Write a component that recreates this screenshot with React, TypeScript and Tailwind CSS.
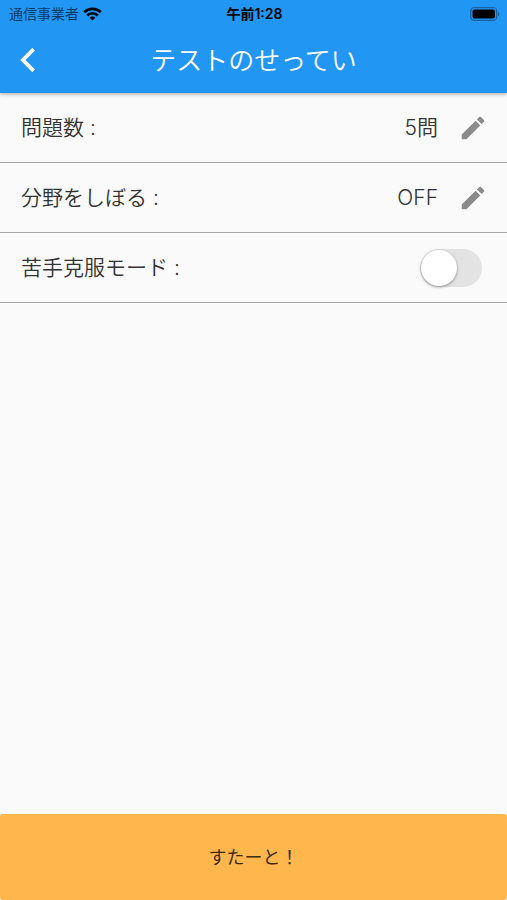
import React, { useState } from 'react';

const StatusBar = () => (
  <div className="grid grid-cols-3 items-center h-[27px] pl-[9px] pr-[7px] text-[14px] leading-4 text-black">
    <div className="flex items-center gap-1">
      <span className="text-[#0b3c66]">通信事業者</span>
      <svg width="19" height="14" viewBox="0 0 19 14" fill="none" stroke="#00060c" strokeWidth="2.7">
        <path d="M1.3 5.2a11.8 11.8 0 0 1 16.4 0" />
        <path d="M4.2 8.5a7.4 7.4 0 0 1 10.6 0" />
        <path d="M9.5 13.6 6.6 10.7a4 4 0 0 1 5.8 0z" fill="#00060c" stroke="none" />
      </svg>
    </div>
    <span className="text-center font-semibold whitespace-nowrap">午前1:28</span>
    <svg className="justify-self-end" width="30" height="14" viewBox="0 0 30 14">
      <rect x="0.7" y="0.7" width="26" height="12.6" rx="3.6" fill="none" stroke="#1663a3" strokeWidth="1.3" />
      <rect x="2.5" y="2.5" width="22.4" height="9" rx="2" fill="#000" />
      <path d="M28 4.8c2 .8 2 3.6 0 4.4z" fill="#1663a3" />
    </svg>
  </div>
);

const EditButton = ({ label }: { label: string }) => (
  <button type="button" aria-label={label} className="cursor-pointer">
    <svg width="30" height="30" viewBox="0 0 24 24" fill="#8b8b8b">
      <path d="M3 17.25V21h3.75L17.81 9.94l-3.75-3.75L3 17.25zM20.71 7.04a1 1 0 0 0 0-1.41l-2.34-2.34a1 1 0 0 0-1.41 0l-1.83 1.83 3.75 3.75 1.83-1.83z" />
    </svg>
  </button>
);

// One line of the settings list
const Row = ({ children }: { children: React.ReactNode }) => (
  <div className="flex items-center justify-between h-[70px] pl-[21px] pr-[19px] border-b border-[#a6a6a6] text-[21px] font-[350]">
    {children}
  </div>
);

const App = () => {
  const [weakMode, setWeakMode] = useState(false);

  return (
    <div className="flex flex-col min-h-screen bg-[#fafafa] text-[#333] font-[Inter,'Noto_Sans_CJK_JP',sans-serif]">
      <header className="relative bg-[#2196f3] shadow-[0_1px_4px_rgba(0,0,0,0.35)]">
        <StatusBar />
        <div className="grid grid-cols-[56px_1fr_56px] items-center h-[66px] text-white">
          <button type="button" aria-label="戻る" className="justify-self-center cursor-pointer">
            <svg width="32" height="32" viewBox="0 0 32 32" fill="none" stroke="#fff" strokeWidth="3.8">
              <path d="M21.7 5.2 10.9 16l10.8 10.8" />
            </svg>
          </button>
          <h1 className="text-center text-[26px] font-[350]">テストのせってい</h1>
        </div>
      </header>

      <main className="flex-1">
        <Row>
          <span>問題数 :</span>
          <div className="flex items-center gap-5">
            <span>5問</span>
            <EditButton label="問題数を変更" />
          </div>
        </Row>
        <Row>
          <span>分野をしぼる :</span>
          <div className="flex items-center gap-5">
            <span>OFF</span>
            <EditButton label="分野を変更" />
          </div>
        </Row>
        <Row>
          <label htmlFor="weak-mode">苦手克服モード :</label>
          <input
            id="weak-mode"
            type="checkbox"
            role="switch"
            checked={weakMode}
            onChange={(e) => setWeakMode(e.target.checked)}
            className="appearance-none cursor-pointer w-[62px] h-[38px] p-px mr-[6px] rounded-full bg-[#e3e3e3] checked:bg-[#34c759] before:block before:size-9 before:rounded-full before:bg-white before:shadow-[0_1px_3px_rgba(0,0,0,0.4)] checked:before:ml-6"
          />
        </Row>
      </main>

      <button
        type="button"
        className="w-full h-[86px] rounded-[3px] bg-[#ffb74d] text-[18px] text-[#3d2c13] cursor-pointer"
      >
        すたーと！
      </button>
    </div>
  );
};

export default App;
